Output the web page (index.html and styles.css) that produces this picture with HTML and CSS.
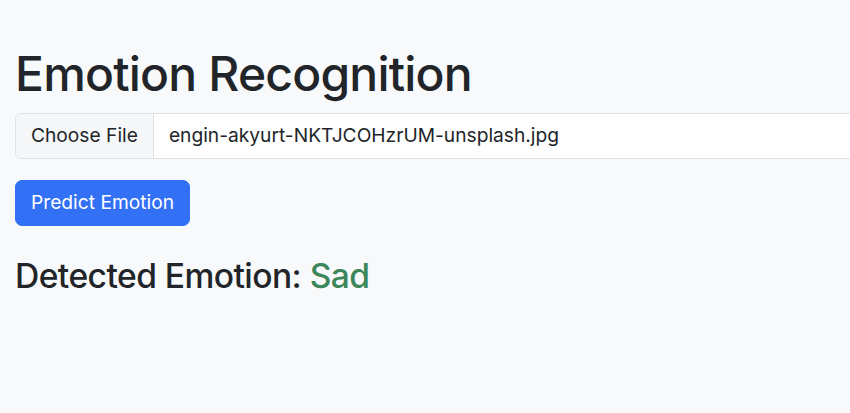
FILE: index.html
```html
<!DOCTYPE html>
<html lang="en">
<head>
<meta charset="utf-8">
<title>Emotion Recognition</title>
<link rel="stylesheet" href="styles.css">
</head>
<body>
<main class="container">
  <h1 class="title">Emotion Recognition</h1>
  <form class="upload-form">
    <div class="file-input">
      <span class="file-button">Choose File</span>
      <span class="file-name">engin-akyurt-NKTJCOHzrUM-unsplash.jpg</span>
    </div>
    <button type="button" class="btn-primary">Predict Emotion</button>
  </form>
  <h3 class="result">Detected Emotion: <span class="result-value">Sad</span></h3>
</main>
</body>
</html>
```

FILE: styles.css
```css
html, body {
  margin: 0;
  padding: 0;
  overflow: hidden;
}
body {
  background: #f8f9fa;
  color: #212529;
  font-family: Inter, "Noto Sans", "Liberation Sans", sans-serif;
  font-size: 19.2px;
  line-height: 1.5;
}
.container {
  padding: 0 15px;
  margin-top: 45px;
  width: 1000px;
}
.title {
  font-size: 48px;
  font-weight: 500;
  line-height: 1.2;
  margin: 0 0 10px;
  letter-spacing: -0.8px;
}
.upload-form {
  display: flex;
  flex-direction: column;
  align-items: flex-start;
  gap: 21px;
}
.file-input {
  display: flex;
  align-items: stretch;
  width: 100%;
  height: 46px;
  box-sizing: border-box;
  border: 1px solid #dee2e6;
  border-radius: 7px;
  background: #fff;
  overflow: hidden;
}
.file-button {
  display: flex;
  align-items: center;
  padding: 0 15px;
  background: #f6f7f8;
  border-right: 1px solid #dee2e6;
}
.file-name {
  display: flex;
  align-items: center;
  padding: 0 15px;
}
.btn-primary {
  font: inherit;
  color: #fff;
  background: #3270f5;
  border: 1px solid #3270f5;
  border-radius: 7px;
  height: 46px;
  padding: 0 15px;
  cursor: pointer;
}
.result {
  font-size: 33.6px;
  font-weight: 500;
  line-height: 1.2;
  margin: 30px 0 0;
  letter-spacing: -0.55px;
}
.result-value {
  color: #3c8759;
}
```
